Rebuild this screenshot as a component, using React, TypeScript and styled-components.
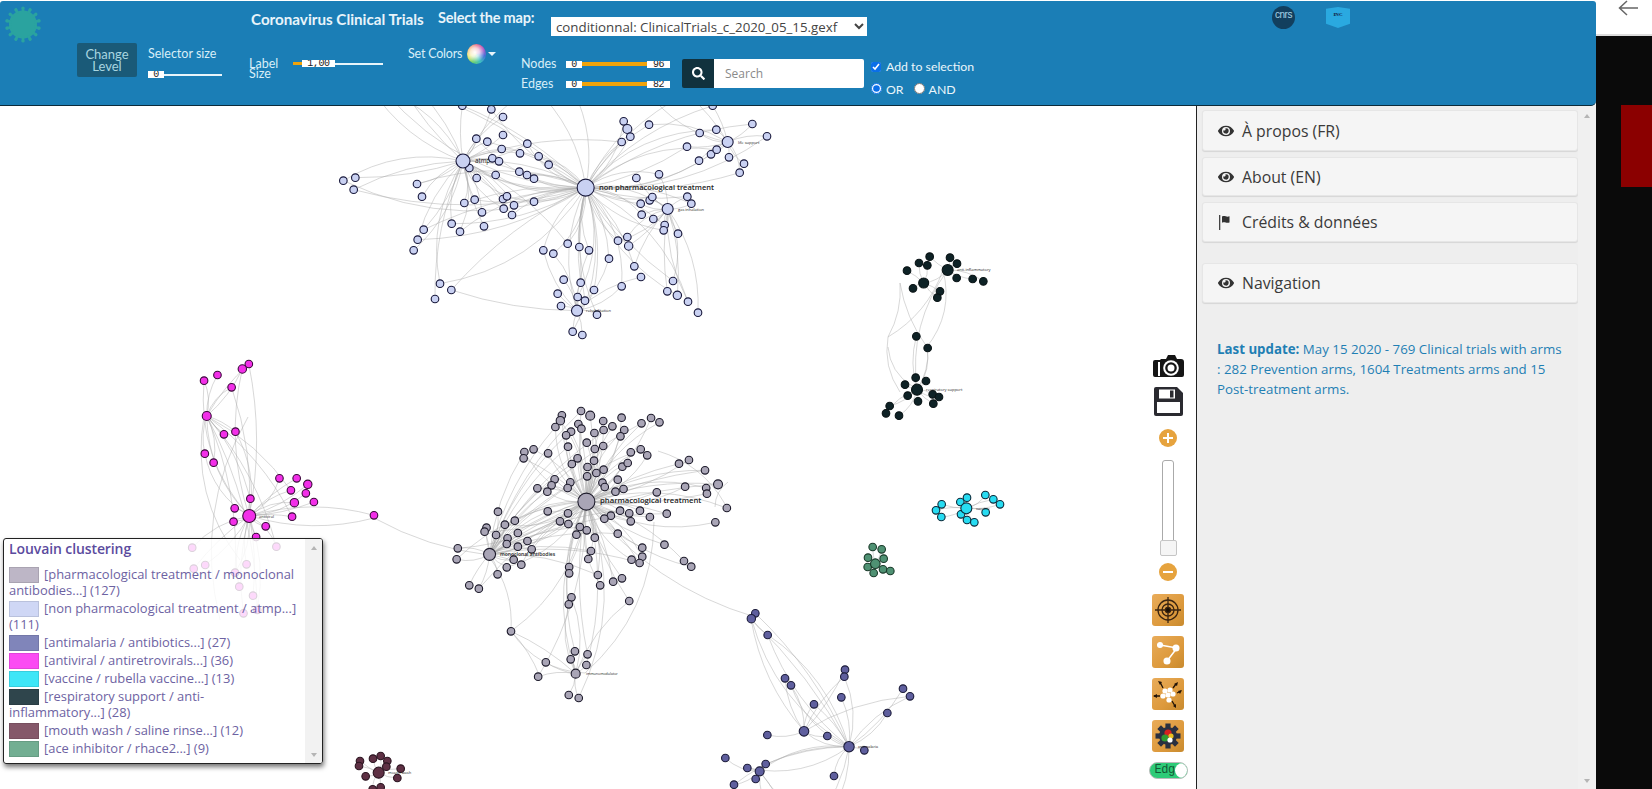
import React from "react";
import styled, { createGlobalStyle } from "styled-components";
import { FaEye, FaSearch } from "react-icons/fa";

const Global = createGlobalStyle`
  html, body { margin: 0; padding: 0; background: #fff; overflow: hidden; }
  * { box-sizing: border-box; }
  #root { width: 1652px; height: 789px; }
`;

const Page = styled.div`
  width: 1652px; height: 789px; display: flex; overflow: hidden;
  font-family: "Open Sans", sans-serif; background: #0a0a0a;
`;
const MainColumn = styled.div`
  width: 1596px; height: 789px; display: flex; flex-direction: column; background: #fff; flex: none;
`;
const Gutter = styled.div`flex: 1; display: flex; flex-direction: column;`;
const BrowserTop = styled.div`
  height: 36px; background: #fff; border-bottom: 2px solid #ddd; display: flex; padding: 0 0 0 22px; color: #666;
`;
const RedBlock = styled.div`width: 31px; height: 82px; background: #8b0000; margin: 69px 0 0 25px; align-self: flex-start;`;

const Header = styled.header`
  height: 105px; flex: none; margin-top: 1px; margin-bottom: -1px; background: #1b7eb6; border-bottom: 1px solid #0c2b3a;
  border-radius: 3px 3px 5px 0; display: flex; flex-direction: column; color: #d8eef8;
  font-family: "Lato", sans-serif; position: relative; z-index: 2;
`;
const TopRow = styled.div`height: 42px; flex: none; display: flex; align-items: flex-start; padding-left: 5px;`;
const VirusBox = styled.div`width: 36px; height: 37px; margin-top: 5px; flex: none;`;
const Title = styled.div`
  margin: 9px 0 0 210px; width: 187px; flex: none; color: #e8f4fa; font-size: 15.2px; font-weight: 700; letter-spacing: 0; line-height: 18px; white-space: nowrap;
`;
const MapLabel = styled.div`
  width: 113px; flex: none; margin-top: 8px; color: #e8f4fa; font-size: 14.5px; font-weight: 700; letter-spacing: -0.2px; line-height: 18px;
`;
const MapSelect = styled.select`
  width: 316px; height: 19px; margin-top: 16px; flex: none; font-family: "Open Sans", sans-serif; font-size: 13.3px;
  border: none; background: #fff; color: #444; padding: 0 0 0 1px; border-radius: 0; line-height: 19px;
`;
const CnrsLogo = styled.div`
  width: 23px; height: 23px; border-radius: 50%; background: #123f5e; color: #a8d4e8; flex: none; margin: 5px 0 0 405px;
  font: 10px/17px "Liberation Sans", sans-serif; text-align: center; letter-spacing: -0.5px;
`;
const IncLogo = styled.div`
  width: 24px; height: 21px; background: #2aa9e0; color: #113; flex: none; margin: 6px 0 0 31px;
  font: 700 5px/16px "Liberation Serif", serif; text-align: center;
  clip-path: polygon(0 8%, 50% 0, 100% 8%, 100% 80%, 50% 100%, 0 80%);
`;

const ControlsRow = styled.div`flex: 1; display: flex; align-items: flex-start; padding-left: 77px;`;
const ChangeLevel = styled.button`
  width: 60px; height: 34px; flex: none; margin-top: 0; background: #1a5a78; border: none; border-radius: 2px; color: #a9d6e0;
  font: 13px/12px "Lato", sans-serif; padding: 0;
`;
const ControlText = styled.div`font-size: 12.5px; line-height: 16px; color: #d8eef8; white-space: nowrap;`;
const SelectorBlock = styled.div`
  width: 74px; margin: 3px 0 0 11px; flex: none; display: flex; flex-direction: column; gap: 9px;
`;
const LabelBlock = styled.div`
  flex: none; margin: 16px 0 0 27px; display: flex; align-items: flex-start; width: 134px;
`;
const LabelText = styled.div`width: 44px; font-size: 12.5px; line-height: 10px; color: #d8eef8;`;
const SliderBar = styled.div<{ $w: number }>`
  width: ${(p) => p.$w}px; height: 7px; display: flex; align-items: center; flex: none;
`;
const LabelSlider = styled(SliderBar)`margin-top: 1px;`;
const Handle = styled.div<{ $w: number }>`
  width: ${(p) => p.$w}px; height: 7px; background: #fff; flex: none; color: #222; text-align: center; overflow: hidden;
  font: 10px/7px "Liberation Mono", monospace; letter-spacing: -0.4px;
`;
const Rail = styled.div<{ $c: string; $h: number }>`flex: 1; height: ${(p) => p.$h}px; background: ${(p) => p.$c};`;
const FixedRail = styled.div`width: 9px; height: 3px; background: #f0a30a; flex: none;`;
const ColorsBlock = styled.div`
  flex: none; width: 88px; margin: 1px 0 0 25px; display: flex; align-items: center; gap: 5px; height: 20px;
`;
const ColorsText = styled(ControlText)`letter-spacing: -0.2px; width: 54px; flex: none;`;
const Wheel = styled.div`
  width: 19px; height: 20px; border-radius: 50%; flex: none;
  background: radial-gradient(circle at 42% 42%, #fff 0, rgba(255,255,255,.75) 28%, rgba(255,255,255,0) 62%),
    conic-gradient(#e4486a, #b04fc0, #4a6fd8, #3cc0c0, #6fd06a, #e8e050, #f09a40, #e4486a);
`;
const Caret = styled.div`
  width: 0; height: 0; margin-left: -3px; border-left: 4px solid transparent; border-right: 4px solid transparent; border-top: 4px solid #e8f4fa;
`;
const RangeBlock = styled.div`
  flex: none; margin: 13px 0 0 25px; width: 149px; display: grid; grid-template-columns: 45px 104px; row-gap: 4px; align-items: center;
`;
const RangeLabel = styled.div`font-size: 12.5px; line-height: 16px; color: #d8eef8;`;
const SearchBox = styled.div`
  flex: none; margin: 16px 0 0 12px; width: 182px; height: 29px; display: flex; border-radius: 2px; overflow: hidden;
`;
const SearchBtn = styled.div`
  width: 32px; background: #11323e; color: #fff; display: flex; align-items: center; justify-content: center; font-size: 13px; flex: none;
`;
const SearchInput = styled.input`
  flex: 1; min-width: 0; border: none; padding: 0 11px; font: 12px "Open Sans", sans-serif; background: #fff; color: #555;
  &::placeholder { color: #8a8a8a; }
`;
const OptionsBlock = styled.div`
  flex: none; margin: 16px 0 0 7px; display: flex; flex-direction: column; gap: 5px; color: #eaf6fb; font-size: 12.3px;
`;
const OptionRow = styled.label`display: flex; align-items: center; height: 16px; line-height: 16px;`;
const SmallCheck = styled.input`width: 10px; height: 10px; margin: 0 5px 0 0; accent-color: #0a6fe8;`;
const SmallRadio = styled.input`width: 11px; height: 11px; margin: 0 4px 0 0; accent-color: #0a6fe8;`;
const RadioText = styled.span`margin-right: 10px; position: relative; top: 2px;`;

const Body = styled.div`flex: 1; display: flex; min-height: 0;`;
const Canvas = styled.div`width: 1196px; flex: none; position: relative; overflow: hidden; background: #fff;`;
const GraphSvg = styled.svg`display: block; width: 1196px; height: 685px;`;
const NodeLabel = styled.text<{ $w?: number }>`
  font-family: "Open Sans", sans-serif; fill: #222; font-weight: ${(p) => p.$w ?? 400};
`;

const Legend = styled.aside`
  position: absolute; left: 3px; top: 433px; width: 320px; height: 226px; background: rgba(255,255,255,.82);
  border: 1px solid #222; border-radius: 3px; box-shadow: 1px 3px 5px rgba(0,0,0,.55); display: flex; overflow: hidden;
`;
const LegendContent = styled.div`flex: 1; min-width: 0; padding: 0 7px 0 5px;`;
const LegendTitle = styled.div`
  font-size: 14px; font-weight: 600; line-height: 19px; color: #5b4b9e; margin-bottom: 8px; letter-spacing: -0.1px;
`;
const LegendItem = styled.div`font-size: 12.93px; line-height: 16px; color: #6d62a2; margin-bottom: 2px;`;
const Swatch = styled.span<{ $c: string }>`
  display: inline-block; width: 30px; height: 16px; margin: -3px 5px -3px 0; vertical-align: -1px; background: ${(p) => p.$c}; border: 1px solid rgba(0,0,0,.1);
`;
const ScrollTrack = styled.div`
  width: 17px; flex: none; background: rgba(241,241,241,.9); display: flex; flex-direction: column; justify-content: space-between; align-items: center; padding: 7px 0 6px;
`;
const ArrowUp = styled.div`width: 0; height: 0; border-left: 3.5px solid transparent; border-right: 3.5px solid transparent; border-bottom: 4px solid #b5b5b5;`;
const ArrowDown = styled.div`width: 0; height: 0; border-left: 3.5px solid transparent; border-right: 3.5px solid transparent; border-top: 4px solid #b5b5b5;`;

const Toolbox = styled.div`
  position: absolute; top: 249px; left: 1148px; width: 40px; display: flex; flex-direction: column; align-items: center;
`;
const Spacer = styled.div<{ $h: number }>`height: ${(p) => p.$h}px; flex: none;`;
const ZoomBtn = styled.div`
  width: 18px; height: 18px; border-radius: 50%; background: #e6a33e; display: flex; align-items: center; justify-content: center; color: #fff; flex: none;
`;
const ZoomTrack = styled.div`
  width: 12px; height: 96px; flex: none; margin: 13px 0 7px; border: 1px solid #aaa; border-radius: 3px; background: #fff; display: flex; align-items: flex-end; justify-content: center; overflow: visible;
`;
const ZoomThumb = styled.div`width: 17px; height: 16px; flex: none; margin: 0 -3px -1px; background: #f5f5f5; border: 1px solid #c5c5c5; border-radius: 2px;`;
const Tile = styled.div`
  width: 32px; height: 32px; flex: none; border-radius: 3px; margin-bottom: 10px; display: flex; align-items: center; justify-content: center;
  background: linear-gradient(135deg, #e9ac5a 0%, #dd9a3d 60%, #c88a2e 100%);
`;
const Toggle = styled.div`
  width: 39px; height: 17px; flex: none; border-radius: 9px; background: #2ecb78; border: 1px solid #bbb; display: flex; align-items: center; justify-content: space-between;
  overflow: hidden; color: #145a36; font: 12px/15px "Liberation Mono", monospace; padding-left: 5px; margin-top: 0; letter-spacing: -0.5px;
`;
const Knob = styled.div`width: 15px; height: 15px; border-radius: 50%; background: #fff; flex: none;`;

const Sidebar = styled.aside`
  width: 400px; flex: none; background: #eee; border-left: 1px solid #222; display: flex; position: relative; z-index: 1;
`;
const SideContent = styled.div`flex: 1; min-width: 0; padding: 5px 0 0 5px; display: flex; flex-direction: column;`;
const SideScroll = styled.div`
  width: 18px; flex: none; background: #f0f0f0; display: flex; flex-direction: column; justify-content: space-between; align-items: center; padding: 9px 0 6px;
`;
const Panel = styled.div<{ $h: number; $mb: number }>`
  height: ${(p) => p.$h}px; margin-bottom: ${(p) => p.$mb}px; flex: none; background: #f5f5f5; border: 1px solid #e6e6e6; border-radius: 3px;
  box-shadow: 0 1px 1px rgba(0,0,0,.1); display: flex; align-items: center; padding-left: 15px; color: #3a3a3a; font-size: 15.8px;
`;
const PanelIcon = styled.span`width: 24px; display: flex; align-items: center; font-size: 16px; color: #333; flex: none;`;
const UpdateNote = styled.p`
  margin: 36px 0 0 15px; width: 350px; font-size: 13.3px; line-height: 20px; color: #1f7fb4;
  b { font-weight: 700; }
`;

type N = [number, number, number?];
const conv = (ox: number, oy: number, fx: number, fy: number, list: N[]): N[] =>
  list.map(([x, y, r]) => [ox + x / fx, oy + y / fy, r]);

const nonPharmHubs: N[] = conv(320, 100, 3, 3, [[797, 263, 8.5], [429, 183, 7], [1223, 126, 5.5], [1043, 327, 5.5], [771, 632, 5.5]]);
const nonPharm = conv(320, 100, 3, 3, [
  [427,17],[514,28],[549,51],[469,116],[502,125],[549,105],[545,147],[622,131],[600,160],[656,169],[686,194],[517,175],[537,184],[448,204],[470,234],[527,225],[598,215],[621,225],[642,236],[70,242],[106,233],[101,269],[291,252],[306,290],[433,309],[464,299],[549,297],[561,289],[582,316],[551,326],[576,345],[642,305],[486,337],[395,371],[420,395],[492,379],[311,389],[293,419],[281,451],[360,551],[394,570],[345,597],[670,451],[700,461],[743,431],[778,441],[807,451],[731,539],[782,548],[822,570],[713,581],[773,591],[795,602],[723,618],[831,644],[758,695],[787,705],[867,476],[894,422],[922,411],[926,438,4.2],[943,499],[963,531],[905,559],[1059,543],[1042,574],[1072,586,4.2],[1104,605],[1134,638],[911,64],[922,87,4.5],[931,110],[905,126],[987,74],[1139,99],[1189,89],[1101,140],[1137,182],[1173,163],[1190,149],[1227,172],[1297,72],[1341,109],[1272,191],[1259,218],[1178,17],[949,234],[1017,223],[962,311],[989,301],[997,291],[965,344],[1000,357],[1034,375],[1031,391],[1074,401],[1102,290],[1114,311],
  [150,-40],[190,-30],[240,-50],[300,-25],[640,-40],[760,-30],[980,-30],[1100,-20]
]);
const pharmHubs = conv(170, 350, 2.613, 3, [[1088, 455, 8.5], [835, 613, 6], [1060, 971, 4.5]]);
const pharm = conv(170, 350, 2.613, 3, [
  [1074,183],[1098,197,4.5],[1024,196],[1020,212,4.2],[1007,231],[1067,222],[1075,236],[1048,245],[1035,256],[1109,249],[1132,213],[1133,240],[1156,229],[1180,203],[1187,240],[1177,259],[1232,220],[1257,204],[1279,217],[1089,278],[1040,290],[1110,297],[1132,288],[950,298],[926,306],[924,325],[988,310],[1204,307],[1230,298],[1247,316],[1065,325],[1108,332],[1050,342],[1091,351],[1133,359],[1114,369],[1090,379],[1182,350],[1196,339],[1170,389],[1005,388],[997,406],[1046,397],[960,415],[986,425],[1039,414],[1130,398],[1136,411],[1164,425],[1185,417],[1330,341],[1356,330],[1398,361],[1346,410],[1401,414],[1403,431],[1432,403,4.5],[1272,427],[1455,474],[1425,517],[1298,491],[1254,501],[1228,482],[1200,490],[1176,482],[1152,497],[1135,506],[1204,514],[987,484],[1040,490],[1019,514],[1041,522],[1071,531],[1089,541],[1062,554],[1110,563],[1170,551],[857,485],[901,512],[875,524],[827,533],[822,545],[852,555],[909,549],[882,565],[880,582],[934,573],[909,590],[945,598],[898,629],[918,644],[880,652],[856,673],[752,595],[749,628],[782,706],[807,716],[1234,593],[1234,620],[1206,629],[1227,639],[1292,584],[1343,633],[1362,650],[1100,603],[1093,627],[1043,651],[1043,670],[1118,675],[1124,706],[1158,695],[1181,685],[1200,753],[1049,742],[1042,763],[891,844],[982,937],[962,980],[1058,904],[1047,928],[1091,913],[1088,945],[1042,1035],[1068,1044]
]);
const magentaHubs = conv(170, 350, 2.613, 3, [[207, 498, 6.5], [96, 198, 4.5]]);
const magenta = conv(170, 350, 2.613, 3, [
  [206,42],[189,57,4.2],[124,75],[89,92],[161,112],[141,253],[171,245],[91,311],[114,338],[286,385],[331,385],[360,403,4.2],[316,421],[355,430],[325,458,4.2],[376,456],[210,446],[169,475],[166,515],[250,529],[319,500],[225,561],[533,496],
  [58,593],[278,590],[62,656],[92,645],[200,643],[170,668],[181,710],[217,737],[192,790],[228,780]
]);
const blackHubs = conv(700, 240, 3, 3, [[743, 90, 5.5], [671, 129, 5], [651, 449, 5.5]]);
const black = conv(700, 240, 3, 3, [
  [689,50],[750,53],[657,69],[682,76],[771,71],[621,92],[770,114],[818,117],[850,124],[639,145],[720,154],[712,173],[649,289],[683,324],[647,413],[678,423],[615,434],[623,467],[698,463],[717,471],[654,484],[700,491],[569,498],[558,520],[597,527]
]);
const cyanHubs = conv(700, 240, 3, 3, [[799, 805, 5.5]]);
const cyan = conv(700, 240, 3, 3, [[725,793],[708,811],[724,831],[781,786],[801,773],[783,823],[801,840],[823,847],[857,817],[856,765],[880,778],[900,793]]);
const greenHubs = conv(850, 535, 3, 3, [[76, 86, 4.8]]);
const green = conv(850, 535, 3, 3, [[68,36],[95,43],[54,68],[101,71],[53,96],[71,114],[99,103],[121,108]]);
const blueHubs = conv(700, 590, 3, 3, [[447, 470, 5.2], [312, 424, 4.8], [179, 544, 4.5], [154, 86, 4.2]]);
const blue = conv(700, 590, 3, 3, [[166,70],[203,135],[255,265],[273,286],[342,343],[435,239],[433,260],[424,322],[202,435],[382,438],[493,481],[609,296],[630,319],[562,369],[76,504],[142,534],[197,522],[167,567],[102,584],[402,558],[260,680],[340,700],[400,660],[220,690]]);
const maroonHubs = conv(350, 740, 3, 3, [[86, 98, 5.5]]);
const maroon = conv(350, 740, 3, 3, [[30,63],[27,78],[69,56],[92,48],[112,63],[109,80],[152,86],[142,114],[47,109],[68,148],[92,142]]);

type Cluster = { hubs: N[]; nodes: N[]; fill: string; ring: string; second: boolean };
const clusters: Cluster[] = [
  { hubs: nonPharmHubs, nodes: nonPharm, fill: "#c9d1f2", ring: "#17173a", second: true },
  { hubs: pharmHubs, nodes: pharm, fill: "#a9a5b6", ring: "#1c1a2a", second: true },
  { hubs: magentaHubs, nodes: magenta, fill: "#f22fe8", ring: "#3a0a3a", second: true },
  { hubs: blackHubs, nodes: black, fill: "#0e2226", ring: "#0a1416", second: false },
  { hubs: cyanHubs, nodes: cyan, fill: "#27dcf2", ring: "#0a2a3a", second: false },
  { hubs: greenHubs, nodes: green, fill: "#4f9173", ring: "#1a3a2a", second: false },
  { hubs: blueHubs, nodes: blue, fill: "#5f5f9e", ring: "#1c1c3a", second: true },
  { hubs: maroonHubs, nodes: maroon, fill: "#5e3044", ring: "#2a1420", second: false },
];

const arc = (a: N, b: N, k: number) => {
  const mx = (a[0] + b[0]) / 2, my = (a[1] + b[1]) / 2;
  const dx = b[0] - a[0], dy = b[1] - a[1];
  return `M${a[0].toFixed(1)} ${a[1].toFixed(1)}Q${(mx - dy * k).toFixed(1)} ${(my + dx * k).toFixed(1)} ${b[0].toFixed(1)} ${b[1].toFixed(1)}`;
};
const dist = (a: N, b: N) => Math.hypot(a[0] - b[0], a[1] - b[1]);

const edgePaths: string[] = [];
clusters.forEach((c) => {
  c.nodes.forEach((n, i) => {
    const near = [...c.hubs].sort((a, b) => dist(a, n) - dist(b, n))[0];
    const sign = i % 2 ? 1 : -1;
    edgePaths.push(arc(near, n, sign * (0.08 + (i % 5) * 0.03)));
    if (c.second && near !== c.hubs[0] && (i % 3 !== 2)) edgePaths.push(arc(c.hubs[0], n, -sign * (0.1 + (i % 4) * 0.04)));
    if (c.second && near === c.hubs[0] && c.hubs[1] && i % 4 === 0) edgePaths.push(arc(c.hubs[1], n, sign * 0.12));
  });
  if (c.hubs.length > 1) c.hubs.slice(1).forEach((h, i) => edgePaths.push(arc(c.hubs[0], h, i % 2 ? 0.2 : -0.2)));
});
const P = (x: number, y: number): N => [x, y];
const extraEdges: [N, N, number][] = [
  [P(374, 518), P(489, 555), 0.1], [P(374, 518), P(250, 516), -0.14], [P(586, 502), P(755, 617), 0.16],
  [P(751, 619), P(804, 731), 0.14], [P(751, 619), P(849, 747), -0.08], [P(768, 635), P(849, 747), -0.18],
  [P(248, 417), P(220, 620), 0.2], [P(204, 416), P(240, 560), 0.22], [P(888, 347), P(912, 386), 0.25],
  [P(943, 270), P(926, 348), -0.25], [P(900, 283), P(888, 337), -0.15], [P(900, 283), P(927, 347), 0.12],
  [P(927, 347), P(918, 389), -0.2], [P(888, 337), P(900, 392), 0.2], [P(943, 270), P(888, 337), -0.18],
  [P(654, 522), P(585, 673), -0.22], [P(658, 451), P(725, 504), -0.2], [P(715, 507), P(728, 482), -0.25],
  [P(511, 631), P(585, 673), 0.25], [P(511, 631), P(490, 558), 0.18], [P(511, 631), P(540, 677), -0.1],
];
extraEdges.forEach(([a, b, k]) => edgePaths.push(arc(a, b, k)));

const labels: [string, number, number, number, number?][] = [
  ["non pharmacological treatment", 599, 189.5, 7.5, 600],
  ["atmp", 475, 163, 6.2],
  ["life support", 738, 144, 4],
  ["gas inhalation", 678, 211, 4],
  ["rehabilitation", 586, 312, 4],
  ["pharmacological treatment", 600, 503, 7.7, 600],
  ["monoclonal antibodies", 500, 556, 5, 600],
  ["antiviral", 259, 518, 4],
  ["immunomodulator", 586, 675, 3.6],
  ["anti-inflammatory", 957, 271, 4],
  ["respiratory support", 926, 391, 4],
  ["vaccine", 976, 510, 4],
  ["antimalaria", 858, 748, 3.8],
  ["mouth wash", 388, 774, 4],
];

const Graph = () => (
  <GraphSvg viewBox="0 105 1196 685">
    <g fill="none" stroke="#a8a8a8" strokeOpacity="0.5" strokeWidth="0.9">
      {edgePaths.map((d, i) => <path key={i} d={d} />)}
    </g>
    {clusters.map((c, ci) => (
      <g key={ci} fill={c.fill} stroke={c.ring} strokeWidth="1.1">
        {[...c.nodes, ...c.hubs].map((n, i) => <circle key={i} cx={n[0]} cy={n[1]} r={n[2] ?? 3.8} />)}
      </g>
    ))}
    {labels.map(([t, x, y, s, w]) => <NodeLabel key={t} x={x} y={y} fontSize={s} $w={w}>{t}</NodeLabel>)}
  </GraphSvg>
);

const VirusLogo = () => {
  const spikes = Array.from({ length: 14 }, (_, i) => (i * 360) / 14);
  return (
    <svg width="36" height="37" viewBox="-18 -18.5 36 37">
      <circle r="14" fill="#2aa39f" />
      {spikes.map((a) => (
        <g key={a} transform={`rotate(${a})`}>
          <rect x="-1.4" y="-17" width="2.8" height="5" fill="#2aa39f" />
          <circle cy="-16.5" r="1.6" fill="#2aa39f" />
        </g>
      ))}
    </svg>
  );
};
const BackArrow = () => (
  <svg width="20" height="17" viewBox="0 0 20 17" fill="none" stroke="#666" strokeWidth="1.5"><path d="M20 8H1.5M9 1L1.5 8 9 15" /></svg>
);
const FlagIcon = () => (
  <svg width="16" height="16" viewBox="0 0 16 16"><rect x="1" y="1" width="1.3" height="15" fill="#444" /><path d="M4 2.5c3-1.5 4 1 7.5-.2v6.2c-3.5 1.2-4.5-1.2-7.5.2z" fill="#333" /></svg>
);
const CameraIcon = () => (
  <svg width="31" height="24" viewBox="0 0 31 24">
    <path d="M2 6h5l1-1h5l2-4h7l2 4h4a3 3 0 0 1 3 3v13a2 2 0 0 1-2 2H2a2 2 0 0 1-2-2V8a2 2 0 0 1 2-2z" fill="#151515" />
    <circle cx="18" cy="14" r="7.8" fill="#fff" /><circle cx="18" cy="14" r="5.8" fill="#151515" /><circle cx="18" cy="14" r="3.5" fill="#fff" />
    <rect x="5" y="8" width="2" height="14" fill="#fff" />
  </svg>
);
const SaveIcon = () => (
  <svg width="29" height="29" viewBox="0 0 29 29">
    <path d="M2 0h21l6 6v21a2 2 0 0 1-2 2H2a2 2 0 0 1-2-2V2a2 2 0 0 1 2-2z" fill="#2a2a30" />
    <rect x="3" y="15" width="23" height="11" fill="#fff" /><rect x="5" y="2.5" width="16" height="9" fill="#fff" /><rect x="16" y="3.5" width="3.5" height="7" fill="#2a2a30" />
  </svg>
);
const TargetIcon = () => (
  <svg width="26" height="26" viewBox="0 0 26 26" fill="none" stroke="#3a2410" strokeWidth="1.3">
    <circle cx="13" cy="13" r="10" /><circle cx="13" cy="13" r="6" /><path d="M13 0v26M0 13h26" /><circle cx="13" cy="13" r="2.6" fill="#1a1005" />
  </svg>
);
const PathIcon = () => (
  <svg width="26" height="26" viewBox="0 0 26 26" fill="#fff" stroke="#fff" strokeWidth="1.5">
    <path d="M5 6l17 3-10 13" fill="none" /><circle cx="5" cy="6" r="2.3" /><circle cx="21" cy="9" r="2.8" /><circle cx="12" cy="22" r="2.8" />
  </svg>
);
const SpreadIcon = () => (
  <svg width="30" height="30" viewBox="0 0 30 30">
    <g stroke="#221408" strokeWidth="1.3" fill="#221408">
      <path d="M10 9L7 3M20 9l3-4M24 14l4-2M7 17l-6-0M19 22l3 5" />
      <path d="M5 2l4 1-2 3zM25 3l-1 4-3-2zM29 11l-2 4-2-3zM0 17l4-2v4zM23 29l-3-2 3-2z" stroke="none" />
    </g>
    <g fill="#fff"><circle cx="12" cy="12" r="2.6" /><circle cx="17" cy="11" r="2.6" /><circle cx="10" cy="17" r="2.6" /><circle cx="15" cy="16" r="2.6" /><circle cx="20" cy="15" r="2.6" /><circle cx="16" cy="21" r="2.6" /></g>
  </svg>
);
const GearIcon = () => {
  const teeth = [0, 45, 90, 135, 180, 225, 270, 315];
  return (
    <svg width="26" height="26" viewBox="-13 -13 26 26">
      {teeth.map((a) => <rect key={a} x="-2.6" y="-12.5" width="5.2" height="6" fill="#2a3040" transform={`rotate(${a})`} />)}
      <circle r="9" fill="#2a3040" />
      <circle cx="0" cy="-3" r="3.6" fill="#d42020" /><circle cx="-3" cy="2" r="3.6" fill="#2f9a30" /><circle cx="3" cy="0" r="2.6" fill="#e8c020" /><circle cx="2" cy="4" r="2.6" fill="#fff" />
    </svg>
  );
};

const legendItems: [string, string][] = [
  ["#bdb6c6", "[pharmacological treatment / monoclonal antibodies...] (127)"],
  ["#cfd7f5", "[non pharmacological treatment / atmp...] (111)"],
  ["#8085ba", "[antimalaria / antibiotics...] (27)"],
  ["#fb4bf3", "[antiviral / antiretrovirals...] (36)"],
  ["#3ee6f7", "[vaccine / rubella vaccine...] (13)"],
  ["#2f454c", "[respiratory support / anti-inflammatory...] (28)"],
  ["#85586a", "[mouth wash / saline rinse...] (12)"],
  ["#72ae92", "[ace inhibitor / rhace2...] (9)"],
];

export default function App() {
  return (
    <Page>
      <Global />
      <MainColumn>
        <Header>
          <TopRow>
            <VirusBox><VirusLogo /></VirusBox>
            <Title>Coronavirus Clinical Trials</Title>
            <MapLabel>Select the map:</MapLabel>
            <MapSelect defaultValue="c"><option value="c">conditionnal: ClinicalTrials_c_2020_05_15.gexf</option></MapSelect>
            <CnrsLogo>cnrs</CnrsLogo>
            <IncLogo>INC</IncLogo>
          </TopRow>
          <ControlsRow>
            <ChangeLevel>Change<br />Level</ChangeLevel>
            <SelectorBlock>
              <ControlText>Selector size</ControlText>
              <SliderBar $w={74}><Handle $w={16}>0</Handle><Rail $c="#e8f4fa" $h={2} /></SliderBar>
            </SelectorBlock>
            <LabelBlock>
              <LabelText>Label<br />Size</LabelText>
              <LabelSlider $w={90}><FixedRail /><Handle $w={33}>1,00</Handle><Rail $c="#e8f4fa" $h={2} /></LabelSlider>
            </LabelBlock>
            <ColorsBlock><ColorsText>Set Colors</ColorsText><Wheel /><Caret /></ColorsBlock>
            <RangeBlock>
              <RangeLabel>Nodes</RangeLabel>
              <SliderBar $w={104}><Handle $w={16}>0</Handle><Rail $c="#f0a30a" $h={4} /><Handle $w={23}>96</Handle></SliderBar>
              <RangeLabel>Edges</RangeLabel>
              <SliderBar $w={104}><Handle $w={16}>0</Handle><Rail $c="#f0a30a" $h={4} /><Handle $w={23}>82</Handle></SliderBar>
            </RangeBlock>
            <SearchBox>
              <SearchBtn><FaSearch /></SearchBtn>
              <SearchInput placeholder="Search" />
            </SearchBox>
            <OptionsBlock>
              <OptionRow><SmallCheck type="checkbox" defaultChecked />Add to selection</OptionRow>
              <OptionRow>
                <SmallRadio type="radio" name="m" defaultChecked /><RadioText>OR</RadioText>
                <SmallRadio type="radio" name="m" /><RadioText>AND</RadioText>
              </OptionRow>
            </OptionsBlock>
          </ControlsRow>
        </Header>
        <Body>
          <Canvas>
            <Graph />
            <Legend>
              <LegendContent>
                <LegendTitle>Louvain clustering</LegendTitle>
                {legendItems.map(([c, t]) => <LegendItem key={t}><Swatch $c={c} />{t}</LegendItem>)}
              </LegendContent>
              <ScrollTrack><ArrowUp /><ArrowDown /></ScrollTrack>
            </Legend>
            <Toolbox>
              <CameraIcon />
              <Spacer $h={9} />
              <SaveIcon />
              <Spacer $h={13} />
              <ZoomBtn><svg width="10" height="10" viewBox="0 0 10 10"><path d="M5 0v10M0 5h10" stroke="#fff" strokeWidth="2" /></svg></ZoomBtn>
              <ZoomTrack><ZoomThumb /></ZoomTrack>
              <ZoomBtn><svg width="10" height="10" viewBox="0 0 10 10"><path d="M0 5h10" stroke="#fff" strokeWidth="2" /></svg></ZoomBtn>
              <Spacer $h={13} />
              <Tile><TargetIcon /></Tile>
              <Tile><PathIcon /></Tile>
              <Tile><SpreadIcon /></Tile>
              <Tile><GearIcon /></Tile>
              <Toggle>Edg<Knob /></Toggle>
            </Toolbox>
          </Canvas>
          <Sidebar>
            <SideContent>
              <Panel $h={41} $mb={6}><PanelIcon><FaEye /></PanelIcon>À propos (FR)</Panel>
              <Panel $h={39} $mb={6}><PanelIcon><FaEye /></PanelIcon>About (EN)</Panel>
              <Panel $h={40} $mb={21}><PanelIcon><FlagIcon /></PanelIcon>Crédits &amp; données</Panel>
              <Panel $h={40} $mb={0}><PanelIcon><FaEye /></PanelIcon>Navigation</Panel>
              <UpdateNote><b>Last update:</b> May 15 2020 - 769 Clinical trials with arms : 282 Prevention arms, 1604 Treatments arms and 15 Post-treatment arms.</UpdateNote>
            </SideContent>
            <SideScroll><ArrowUp /><ArrowDown /></SideScroll>
          </Sidebar>
        </Body>
      </MainColumn>
      <Gutter>
        <BrowserTop><BackArrow /></BrowserTop>
        <RedBlock />
      </Gutter>
    </Page>
  );
}
